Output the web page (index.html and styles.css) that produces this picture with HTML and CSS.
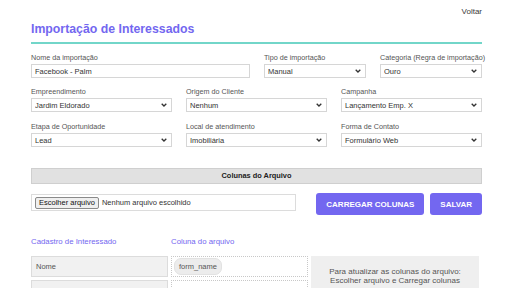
FILE: index.html
```html
<!DOCTYPE html>
<html lang="pt-BR">

<head>
    <meta charset="UTF-8">
    <meta name="viewport" content="width=device-width, initial-scale=1.0">
    <title>Importação de Interessados</title>
    <link rel="stylesheet" href="styles.css">
</head>

<body>
    <div class="page">
        <div class="topbar">
            <a href="#" class="back">Voltar</a>
        </div>

        <h1 class="title">Importação de Interessados</h1>

        <form class="form">
            <div class="row row-first">
                <div class="field">
                    <label>Nome da importação</label>
                    <input type="text" value="Facebook - Palm">
                </div>
                <div class="field">
                    <label>Tipo de importação</label>
                    <div class="select">
                        <select><option>Manual</option></select>
                        <svg class="chev" viewBox="0 0 6 4"><polyline points="0.7,0.7 3,3 5.3,0.7" /></svg>
                    </div>
                </div>
                <div class="field">
                    <label>Categoria (Regra de importação)</label>
                    <div class="select">
                        <select><option>Ouro</option></select>
                        <svg class="chev" viewBox="0 0 6 4"><polyline points="0.7,0.7 3,3 5.3,0.7" /></svg>
                    </div>
                </div>
            </div>

            <div class="row">
                <div class="field">
                    <label>Empreendimento</label>
                    <div class="select">
                        <select><option>Jardim Eldorado</option></select>
                        <svg class="chev" viewBox="0 0 6 4"><polyline points="0.7,0.7 3,3 5.3,0.7" /></svg>
                    </div>
                </div>
                <div class="field">
                    <label>Origem do Cliente</label>
                    <div class="select">
                        <select><option>Nenhum</option></select>
                        <svg class="chev" viewBox="0 0 6 4"><polyline points="0.7,0.7 3,3 5.3,0.7" /></svg>
                    </div>
                </div>
                <div class="field">
                    <label>Campanha</label>
                    <div class="select">
                        <select><option>Lançamento Emp. X</option></select>
                        <svg class="chev" viewBox="0 0 6 4"><polyline points="0.7,0.7 3,3 5.3,0.7" /></svg>
                    </div>
                </div>
            </div>

            <div class="row">
                <div class="field">
                    <label>Etapa de Oportunidade</label>
                    <div class="select">
                        <select><option>Lead</option></select>
                        <svg class="chev" viewBox="0 0 6 4"><polyline points="0.7,0.7 3,3 5.3,0.7" /></svg>
                    </div>
                </div>
                <div class="field">
                    <label>Local de atendimento</label>
                    <div class="select">
                        <select><option>Imobiliária</option></select>
                        <svg class="chev" viewBox="0 0 6 4"><polyline points="0.7,0.7 3,3 5.3,0.7" /></svg>
                    </div>
                </div>
                <div class="field">
                    <label>Forma de Contato</label>
                    <div class="select">
                        <select><option>Formulário Web</option></select>
                        <svg class="chev" viewBox="0 0 6 4"><polyline points="0.7,0.7 3,3 5.3,0.7" /></svg>
                    </div>
                </div>
            </div>

            <div class="section-bar">Colunas do Arquivo</div>

            <div class="upload-row">
                <div class="file-box">
                    <button type="button" class="file-btn">Escolher arquivo</button>
                    <span class="file-name">Nenhum arquivo escolhido</span>
                </div>
                <div class="actions">
                    <button type="button" class="btn">CARREGAR COLUNAS</button>
                    <button type="submit" class="btn">SALVAR</button>
                </div>
            </div>

            <div class="map-head">
                <span>Cadastro de Interessado</span>
                <span>Coluna do arquivo</span>
            </div>

            <div class="map-grid">
                <div class="map-field">Nome</div>
                <div class="map-drop"><span class="chip">form_name</span></div>
                <div class="map-info">
                    Para atualizar as colunas do arquivo:<br>
                    Escolher arquivo e Carregar colunas
                </div>
                <div class="map-field">Data de Nascimento</div>
                <div class="map-drop"></div>
            </div>
        </form>
    </div>
</body>

</html>
```

FILE: styles.css
```css
body {
    margin: 0;
    font-family: "Liberation Sans", Arial, sans-serif;
    color: #333;
    background: #fff;
}

.page {
    padding: 0 30px 0 31px;
}

.topbar {
    display: flex;
    justify-content: flex-end;
    align-items: center;
    height: 22px;
}

.back {
    font-size: 8px;
    color: #3a3a3a;
    text-decoration: none;
}

.title {
    margin: 0;
    padding: 0 0 5px;
    font-size: 12.3px;
    line-height: 15px;
    color: #7367f0;
    border-bottom: 2px solid #72d6c9;
}

/* Campos do formulario */
.form {
    padding-top: 9px;
}

.row {
    display: grid;
    grid-template-columns: 1fr 1fr 1fr;
    column-gap: 14px;
    margin-bottom: 10px;
}

.row-first {
    grid-template-columns: 1fr 102px 102px;
    margin-bottom: 9px;
}

.field label {
    display: block;
    font-size: 7.2px;
    line-height: 10px;
    color: #555;
    white-space: nowrap;
    margin-bottom: 1px;
}

.field input,
.field select {
    display: block;
    box-sizing: border-box;
    width: 100%;
    height: 14px;
    margin: 0;
    padding: 0 3px;
    font-family: inherit;
    font-size: 7.5px;
    color: #333;
    background: #fff;
    border: 1px solid #d6d6d6;
    border-radius: 0;
    outline: none;
}

.select {
    position: relative;
}

.field select {
    appearance: none;
    -webkit-appearance: none;
    padding: 0 12px 0 3px;
}

.chev {
    position: absolute;
    right: 5px;
    top: 5px;
    width: 6px;
    height: 4px;
    fill: none;
    stroke: #333;
    stroke-width: 1.3;
    pointer-events: none;
}

/* Barra della sezione colonne */
.section-bar {
    margin-top: 21px;
    height: 16px;
    line-height: 14px;
    box-sizing: border-box;
    text-align: center;
    font-size: 7.4px;
    font-weight: bold;
    color: #222;
    background: #e1e1e1;
    border: 1px solid #cfcfcf;
}

.upload-row {
    display: flex;
    align-items: flex-start;
    margin-top: 9px;
}

.file-box {
    display: flex;
    align-items: center;
    box-sizing: border-box;
    width: 265px;
    height: 17px;
    margin-top: 1px;
    margin-right: auto;
    padding: 0 3px;
    background: #fff;
    border: 1px solid #dcdcdc;
}

.file-btn {
    height: 12px;
    padding: 0 3px;
    font-family: inherit;
    font-size: 7.5px;
    line-height: 10px;
    color: #111;
    background: #efefef;
    border: 1px solid #8a8a8a;
    border-radius: 2px;
}

.file-name {
    margin-left: 3px;
    font-size: 7.5px;
    color: #333;
}

.actions {
    display: flex;
    gap: 6px;
}

.btn {
    height: 22px;
    padding: 0 10px;
    font-family: inherit;
    font-size: 8px;
    font-weight: bold;
    color: #fff;
    background: #7367f0;
    border: none;
    border-radius: 3px;
    cursor: pointer;
}

/* Mappatura colonne */
.map-head {
    display: grid;
    grid-template-columns: 137px 137px 1fr;
    column-gap: 3px;
    margin-top: 22px;
    font-size: 7.8px;
    line-height: 10px;
    color: #7367f0;
}

.map-grid {
    display: grid;
    grid-template-columns: 137px 137px 1fr;
    grid-auto-rows: 21px;
    gap: 3px 3px;
    margin-top: 9px;
}

.map-field {
    display: flex;
    align-items: center;
    box-sizing: border-box;
    padding: 0 4px;
    font-size: 7.5px;
    color: #555;
    background: #f1f1f1;
    border: 1px solid #dcdcdc;
}

.map-drop {
    display: flex;
    align-items: center;
    box-sizing: border-box;
    padding: 0 2px;
    background: #fff;
    border: 1px dotted #c8c8c8;
}

.chip {
    display: inline-block;
    height: 15px;
    line-height: 15px;
    padding: 0 4px;
    font-size: 7.5px;
    color: #555;
    background: #ececec;
    border: 1px solid #e2e2e2;
    border-radius: 7px;
}

.map-info {
    grid-column: 3;
    grid-row: 1 / span 3;
    margin-right: 3px;
    padding-top: 11px;
    font-size: 8px;
    line-height: 9px;
    text-align: center;
    color: #555;
    background: #efefef;
}
```
